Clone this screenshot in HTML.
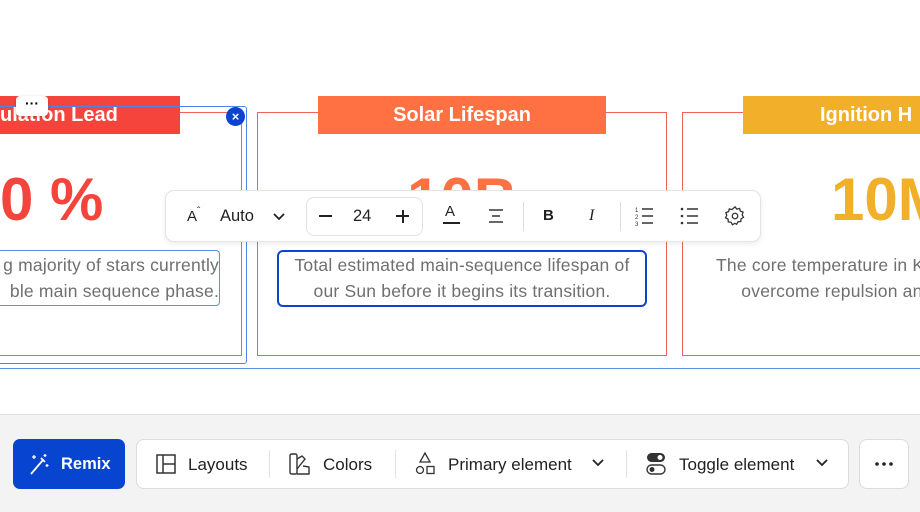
<!DOCTYPE html>
<html><head><meta charset="utf-8"><style>
*{box-sizing:border-box;margin:0;padding:0}
body{width:920px;height:512px;overflow:hidden;background:#fff;font-family:"Liberation Sans",sans-serif;position:relative}
.a{position:absolute}
.card{position:absolute;border:1.5px solid #f0625a;top:112px;height:244px}
.hdr{position:absolute;top:96px;height:38px;color:#fff;font-weight:bold;font-size:20px;line-height:38px;text-align:center}
.big{position:absolute;font-weight:bold;font-size:60px;line-height:60px}
.desc{position:absolute;color:#6f6f6f;font-size:17.5px;line-height:26px;text-align:center;white-space:nowrap;letter-spacing:0.2px}
.tb{position:absolute;left:165px;top:190px;width:596px;height:52px;background:#fff;border:1px solid #e4e4e4;border-radius:9px;box-shadow:0 2px 6px rgba(0,0,0,.08)}
.ic{position:absolute;color:#222}
.bot{position:absolute;top:414px;left:0;width:920px;height:98px;background:#f3f3f3;border-top:1px solid #ddd}
.btn{position:absolute;top:439px;height:50px;background:#fff;border:1px solid #dcdcdc;border-radius:8px}
.bl{position:absolute;top:455px;font-size:17px;color:#222;line-height:20px}
.sep{position:absolute;top:450px;width:1px;height:28px;background:#e2e2e2}
</style></head><body>
<div class="card" style="left:-10px;width:252px"></div>
<div class="hdr" style="left:0;width:180px;background:#f4443b;text-align:left;padding-left:0">ulation Lead</div>
<div class="a" style="left:-10px;top:106px;width:257px;height:258px;border:1px solid #4d86e6;border-radius:3px"></div>
<div class="a" style="left:0;top:368px;width:920px;height:1px;background:#5c8fe8"></div>
<div class="a" style="left:16px;top:96px;width:32px;height:20px;background:#fff;border-radius:4px;box-shadow:0 1px 3px rgba(0,0,0,.2);font-size:14px;font-weight:bold;text-align:center;line-height:14px">···</div>
<div class="a" style="left:226px;top:107px;width:19px;height:19px;border-radius:50%;background:#0b45cf;color:#fff;font-size:13px;text-align:center;line-height:19px;font-weight:bold">×</div>
<div class="big" style="left:0;top:170px;color:#f4443b">0 %</div>
<div class="a" style="left:-10px;top:250px;width:230px;height:56px;border:1px solid #5a8ee8;border-radius:4px"></div>
<div class="desc" style="right:701px;top:252px;text-align:right">g majority of stars currently<br>ble main sequence phase.</div>
<div class="card" style="left:257px;width:410px"></div>
<div class="hdr" style="left:318px;width:288px;background:#ff7142">Solar Lifespan</div>
<div class="big" style="left:257px;width:410px;text-align:center;top:170px;color:#ff7142">10B</div>
<div class="a" style="left:277px;top:250px;width:370px;height:57px;border:2px solid #0b45cf;border-radius:6px"></div>
<div class="desc" style="left:277px;width:370px;top:252px">Total estimated main-sequence lifespan of<br>our Sun before it begins its transition.</div>
<div class="card" style="left:682px;width:260px"></div>
<div class="hdr" style="left:743px;width:200px;background:#f2b02a;text-align:left;padding-left:77px">Ignition H</div>
<div class="big" style="left:831px;top:170px;color:#f2b02a">10M</div>
<div class="desc" style="left:716px;top:252px;text-align:left">The core temperature in K<br>&nbsp;&nbsp;&nbsp;&nbsp;&nbsp;overcome repulsion an</div>
<div class="tb">
 <div class="ic" style="left:21px;top:15px;font-size:15px">A<span style="font-size:10px;vertical-align:7px">ˆ</span></div>
 <div class="ic" style="left:54px;top:16px;font-size:16.5px">Auto</div>
 <svg class="ic" style="left:106px;top:19px" width="14" height="14" viewBox="0 0 14 14"><path d="M2 4l5 5 5-5" fill="none" stroke="#222" stroke-width="1.8"/></svg>
 <div class="a" style="left:140px;top:6px;width:117px;height:39px;border:1px solid #e2e2e2;border-radius:8px"></div>
 <div class="ic" style="left:153px;top:24px;width:13px;height:2px;background:#222"></div>
 <div class="ic" style="left:187px;top:16px;font-size:16.5px">24</div>
 <div class="ic" style="left:230px;top:24px;width:13px;height:2px;background:#222"></div>
 <div class="ic" style="left:235.5px;top:18.5px;width:2px;height:13px;background:#222"></div>
 <div class="ic" style="left:279px;top:12px;font-size:15px">A</div>
 <div class="ic" style="left:277px;top:31px;width:17px;height:2px;background:#222"></div>
 <svg class="ic" style="left:322px;top:17px" width="16" height="16" viewBox="0 0 16 16"><path d="M1 2h14M4 8h8M1 14h14" stroke="#333" stroke-width="1.4"/></svg>
 <div class="a" style="left:357px;top:11px;width:1px;height:29px;background:#ddd"></div>
 <div class="ic" style="left:377px;top:16px;font-size:15px;font-weight:bold">B</div>
 <div class="ic" style="left:423px;top:16px;font-size:16px;font-style:italic;font-family:'Liberation Serif',serif">I</div>
 <div class="a" style="left:454px;top:11px;width:1px;height:29px;background:#ddd"></div>
 <svg class="ic" style="left:469px;top:15px" width="20" height="20" viewBox="0 0 20 20"><path d="M7 3h11M7 10h11M7 17h11" stroke="#333" stroke-width="1.5"/><text x="0" y="6" font-size="6" fill="#333">1</text><text x="0" y="13" font-size="6" fill="#333">2</text><text x="0" y="20" font-size="6" fill="#333">3</text></svg>
 <svg class="ic" style="left:514px;top:15px" width="20" height="20" viewBox="0 0 20 20"><path d="M7 3h11M7 10h11M7 17h11" stroke="#333" stroke-width="1.5"/><circle cx="2" cy="3" r="1.3" fill="#333"/><circle cx="2" cy="10" r="1.3" fill="#333"/><circle cx="2" cy="17" r="1.3" fill="#333"/></svg>
 <svg class="ic" style="left:558px;top:14px" width="22" height="22" viewBox="0 0 24 24"><path d="M12 2l2 2.5 3-.8.8 3 3 1-1 3 1.5 2.8-2.7 1.5-.3 3-3 .3-1.5 2.7L12 20l-2.8 1.5-1.5-2.7-3-.3-.3-3L1.7 14 3 11.2l-1-3 3-1 .8-3 3 .8z" fill="none" stroke="#333" stroke-width="1.4"/><circle cx="12" cy="12" r="3" fill="none" stroke="#333" stroke-width="1.4"/></svg>
</div>
<div class="bot"></div>
<div class="a" style="left:13px;top:439px;width:112px;height:50px;background:#0745d0;border-radius:7px"></div>
<svg class="a" style="left:28px;top:452px" width="22" height="24" viewBox="0 0 22 24"><path d="M3 22L15 8M13 6l4 4" stroke="#fff" stroke-width="1.8" fill="none"/><path d="M6 3v4M4 5h4M17 2v3M15.5 3.5h3M19 12v3M17.5 13.5h3" stroke="#fff" stroke-width="1.3"/></svg>
<div class="a" style="left:61px;top:455px;color:#fff;font-size:16.5px;font-weight:bold">Remix</div>
<div class="btn" style="left:136px;width:713px"></div>
<div class="btn" style="left:859px;width:50px"></div>
<svg class="a" style="left:875px;top:462px" width="18" height="4" viewBox="0 0 18 4"><circle cx="2" cy="2" r="1.8" fill="#222"/><circle cx="9" cy="2" r="1.8" fill="#222"/><circle cx="16" cy="2" r="1.8" fill="#222"/></svg>
<svg class="a" style="left:156px;top:454px" width="20" height="20" viewBox="0 0 20 20"><rect x="1" y="1" width="18" height="18" fill="none" stroke="#333" stroke-width="1.5"/><path d="M7 1v18M7 10h12" stroke="#333" stroke-width="1.5"/></svg>
<div class="bl" style="left:188px">Layouts</div>
<div class="sep" style="left:269px"></div>
<svg class="a" style="left:289px;top:453px" width="22" height="22" viewBox="0 0 22 22"><rect x="1" y="1" width="7" height="20" rx="1.5" fill="none" stroke="#333" stroke-width="1.4"/><path d="M8 6l5-3 3 3-8 10M8 21h12v-7l-6-1" fill="none" stroke="#333" stroke-width="1.4"/></svg>
<div class="bl" style="left:323px">Colors</div>
<div class="sep" style="left:395px"></div>
<svg class="a" style="left:415px;top:451px" width="22" height="24" viewBox="0 0 22 24"><path d="M10 2l-5 9h10z" fill="none" stroke="#333" stroke-width="1.3"/><circle cx="5" cy="19" r="3.5" fill="none" stroke="#333" stroke-width="1.3"/><rect x="12" y="15.5" width="7" height="7" fill="none" stroke="#333" stroke-width="1.3"/></svg>
<div class="bl" style="left:448px">Primary element</div>
<svg class="a" style="left:591px;top:457px" width="14" height="12" viewBox="0 0 14 12"><path d="M2 3l5 5 5-5" fill="none" stroke="#222" stroke-width="1.8"/></svg>
<div class="sep" style="left:626px"></div>
<svg class="a" style="left:646px;top:452px" width="20" height="24" viewBox="0 0 20 24"><rect x="1" y="1" width="18" height="9" rx="4.5" fill="#333"/><circle cx="14" cy="5.5" r="2.5" fill="#fff"/><rect x="1" y="13" width="18" height="9" rx="4.5" fill="none" stroke="#333" stroke-width="1.4"/><circle cx="6" cy="17.5" r="2.5" fill="#333"/></svg>
<div class="bl" style="left:679px">Toggle element</div>
<svg class="a" style="left:815px;top:457px" width="14" height="12" viewBox="0 0 14 12"><path d="M2 3l5 5 5-5" fill="none" stroke="#222" stroke-width="1.8"/></svg>
</body></html>
